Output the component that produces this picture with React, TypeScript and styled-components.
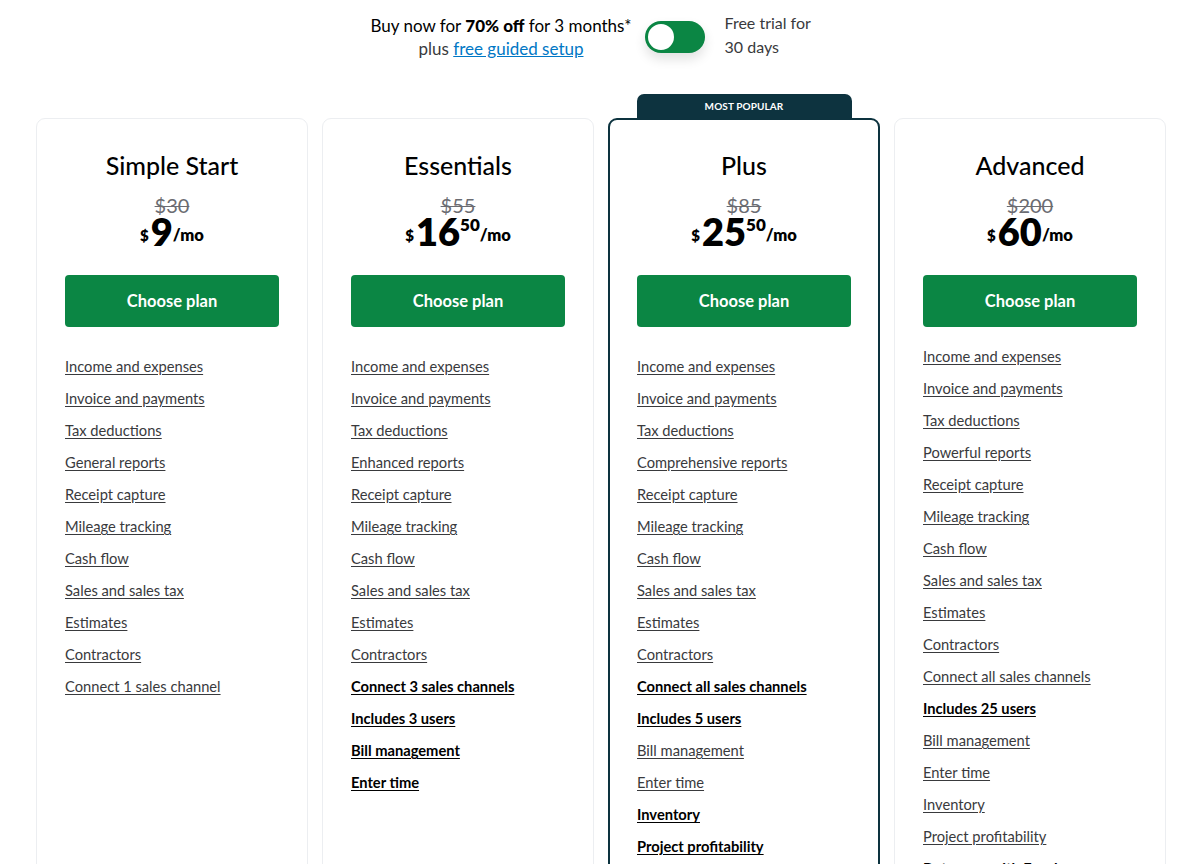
import React from "react";
import styled, { createGlobalStyle } from "styled-components";

const Global = createGlobalStyle`
  html, body { margin: 0; padding: 0; background: #fff; }
  body { font-family: Lato, "Noto Sans", sans-serif; color: #000; }
  * { box-sizing: border-box; }
`;

const Page = styled.div`
  width: 1201px;
  padding: 0 36px 0 36px;
`;

const Promo = styled.div`
  display: flex;
  justify-content: center;
  align-items: center;
  padding-top: 4px;
  padding-right: 6px;
  height: 70px;
`;

const PromoText = styled.div`
  text-align: center;
  font-size: 17px;
  line-height: 23px;
  color: #000;
  b { font-weight: 900; }
`;

const PromoLink = styled.a`
  color: #0077c5;
  text-decoration: underline;
`;

const Plus = styled.span`
  color: #393a3d;
`;

const Toggle = styled.div`
  width: 60px;
  height: 32px;
  border-radius: 16px;
  background: #0b8644;
  display: flex;
  align-items: center;
  padding: 1px;
  margin: 0 20px 0 13px;
  box-shadow: 0 6px 12px rgba(0, 0, 0, 0.12);
`;

const Knob = styled.span`
  width: 30px;
  height: 30px;
  border-radius: 50%;
  background: #fff;
  border: 2px solid #0b8644;
`;

const TrialText = styled.div`
  width: 100px;
  font-size: 16px;
  line-height: 24px;
  color: #393a3d;
  margin-bottom: 4px;
`;

const Grid = styled.div`
  display: grid;
  grid-template-columns: repeat(4, 272px);
  column-gap: 14px;
  margin-top: 24px;
`;

const Column = styled.div`
  display: flex;
  flex-direction: column;
`;

const TabSlot = styled.div`
  height: 24px;
  display: flex;
  justify-content: center;
`;

const Tab = styled.div`
  width: 215px;
  height: 24px;
  background: #0d333f;
  border-radius: 7px 7px 0 0;
  color: #fff;
  font-size: 10px;
  font-weight: 700;
  line-height: 24px;
  text-align: center;
  letter-spacing: 0.1px;
`;

const Card = styled.div<{ $featured?: boolean }>`
  flex: 1;
  border: ${(p) => (p.$featured ? "2px solid #0d333f" : "1px solid #eceef1")};
  border-radius: 9px;
  padding: ${(p) => (p.$featured ? "29px 27px 40px" : "30px 28px 40px")};
  display: flex;
  flex-direction: column;
  align-items: stretch;
`;

const Title = styled.h2`
  margin: 0;
  font-size: 25px;
  font-weight: 500;
  line-height: 32px;
  text-align: center;
  color: #000;
`;

const Strike = styled.div`
  margin-top: 13px;
  font-size: 20px;
  line-height: 22px;
  text-align: center;
  color: #6b6c72;
  text-decoration: line-through;
  text-decoration-thickness: 1px;
`;

const Price = styled.div`
  height: 30px;
  text-align: center;
  font-weight: 800;
  line-height: 30px;
  color: #000;
`;

const Cur = styled.span`
  font-size: 15px;
  line-height: 0;
  vertical-align: 5px;
  margin-right: 2px;
`;

const Amount = styled.span`
  font-size: 38px;
`;

const Cents = styled.span`
  font-size: 17px;
  line-height: 0;
  vertical-align: 15px;
`;

const Per = styled.span`
  font-size: 16.5px;
  line-height: 0;
  vertical-align: 5px;
`;

const Button = styled.button`
  margin-top: 29px;
  height: 52px;
  border: 0;
  border-radius: 4px;
  background: #0b8644;
  color: #fff;
  font-family: Lato, "Noto Sans", sans-serif;
  font-size: 16.5px;
  font-weight: 700;
  cursor: pointer;
`;

const Features = styled.ul<{ $offset: number }>`
  list-style: none;
  margin: ${(p) => p.$offset}px 0 0;
  padding: 0;
`;

const Feature = styled.li<{ $bold?: boolean }>`
  height: 32px;
  line-height: 32px;
  font-size: 14.7px;
  font-weight: ${(p) => (p.$bold ? 700 : 400)};
  color: ${(p) => (p.$bold ? "#000" : "#393a3d")};
  a {
    color: inherit;
    text-decoration: underline;
    text-underline-offset: 2px;
  }
`;

type F = [string, boolean?];

type Plan = {
  name: string;
  was: string;
  dollars: string;
  cents?: string;
  featured?: boolean;
  offset: number;
  features: F[];
};

const base: F[] = [
  ["Income and expenses"],
  ["Invoice and payments"],
  ["Tax deductions"],
];

const plans: Plan[] = [
  {
    name: "Simple Start",
    was: "$30",
    dollars: "9",
    offset: 23,
    features: [
      ...base,
      ["General reports"],
      ["Receipt capture"],
      ["Mileage tracking"],
      ["Cash flow"],
      ["Sales and sales tax"],
      ["Estimates"],
      ["Contractors"],
      ["Connect 1 sales channel"],
    ],
  },
  {
    name: "Essentials",
    was: "$55",
    dollars: "16",
    cents: "50",
    offset: 23,
    features: [
      ...base,
      ["Enhanced reports"],
      ["Receipt capture"],
      ["Mileage tracking"],
      ["Cash flow"],
      ["Sales and sales tax"],
      ["Estimates"],
      ["Contractors"],
      ["Connect 3 sales channels", true],
      ["Includes 3 users", true],
      ["Bill management", true],
      ["Enter time", true],
    ],
  },
  {
    name: "Plus",
    was: "$85",
    dollars: "25",
    cents: "50",
    featured: true,
    offset: 23,
    features: [
      ...base,
      ["Comprehensive reports"],
      ["Receipt capture"],
      ["Mileage tracking"],
      ["Cash flow"],
      ["Sales and sales tax"],
      ["Estimates"],
      ["Contractors"],
      ["Connect all sales channels", true],
      ["Includes 5 users", true],
      ["Bill management"],
      ["Enter time"],
      ["Inventory", true],
      ["Project profitability", true],
    ],
  },
  {
    name: "Advanced",
    was: "$200",
    dollars: "60",
    offset: 13,
    features: [
      ...base,
      ["Powerful reports"],
      ["Receipt capture"],
      ["Mileage tracking"],
      ["Cash flow"],
      ["Sales and sales tax"],
      ["Estimates"],
      ["Contractors"],
      ["Connect all sales channels"],
      ["Includes 25 users", true],
      ["Bill management"],
      ["Enter time"],
      ["Inventory"],
      ["Project profitability"],
      ["Data sync with Excel", true],
    ],
  },
];

export default function App() {
  return (
    <Page>
      <Global />
      <Promo>
        <PromoText>
          Buy now for <b>70% off</b> for 3 months*
          <br />
          <Plus>plus </Plus>
          <PromoLink href="#">free guided setup</PromoLink>
        </PromoText>
        <Toggle>
          <Knob />
        </Toggle>
        <TrialText>Free trial for 30 days</TrialText>
      </Promo>
      <Grid>
        {plans.map((p) => (
          <Column key={p.name}>
            <TabSlot>{p.featured && <Tab>MOST POPULAR</Tab>}</TabSlot>
            <Card $featured={p.featured}>
              <Title>{p.name}</Title>
              <Strike>{p.was}</Strike>
              <Price>
                <Cur>$</Cur>
                <Amount>{p.dollars}</Amount>
                {p.cents && <Cents>{p.cents}</Cents>}
                <Per>/mo</Per>
              </Price>
              <Button>Choose plan</Button>
              <Features $offset={p.offset}>
                {p.features.map(([t, b]) => (
                  <Feature key={t} $bold={b}>
                    <a href="#">{t}</a>
                  </Feature>
                ))}
              </Features>
            </Card>
          </Column>
        ))}
      </Grid>
    </Page>
  );
}
